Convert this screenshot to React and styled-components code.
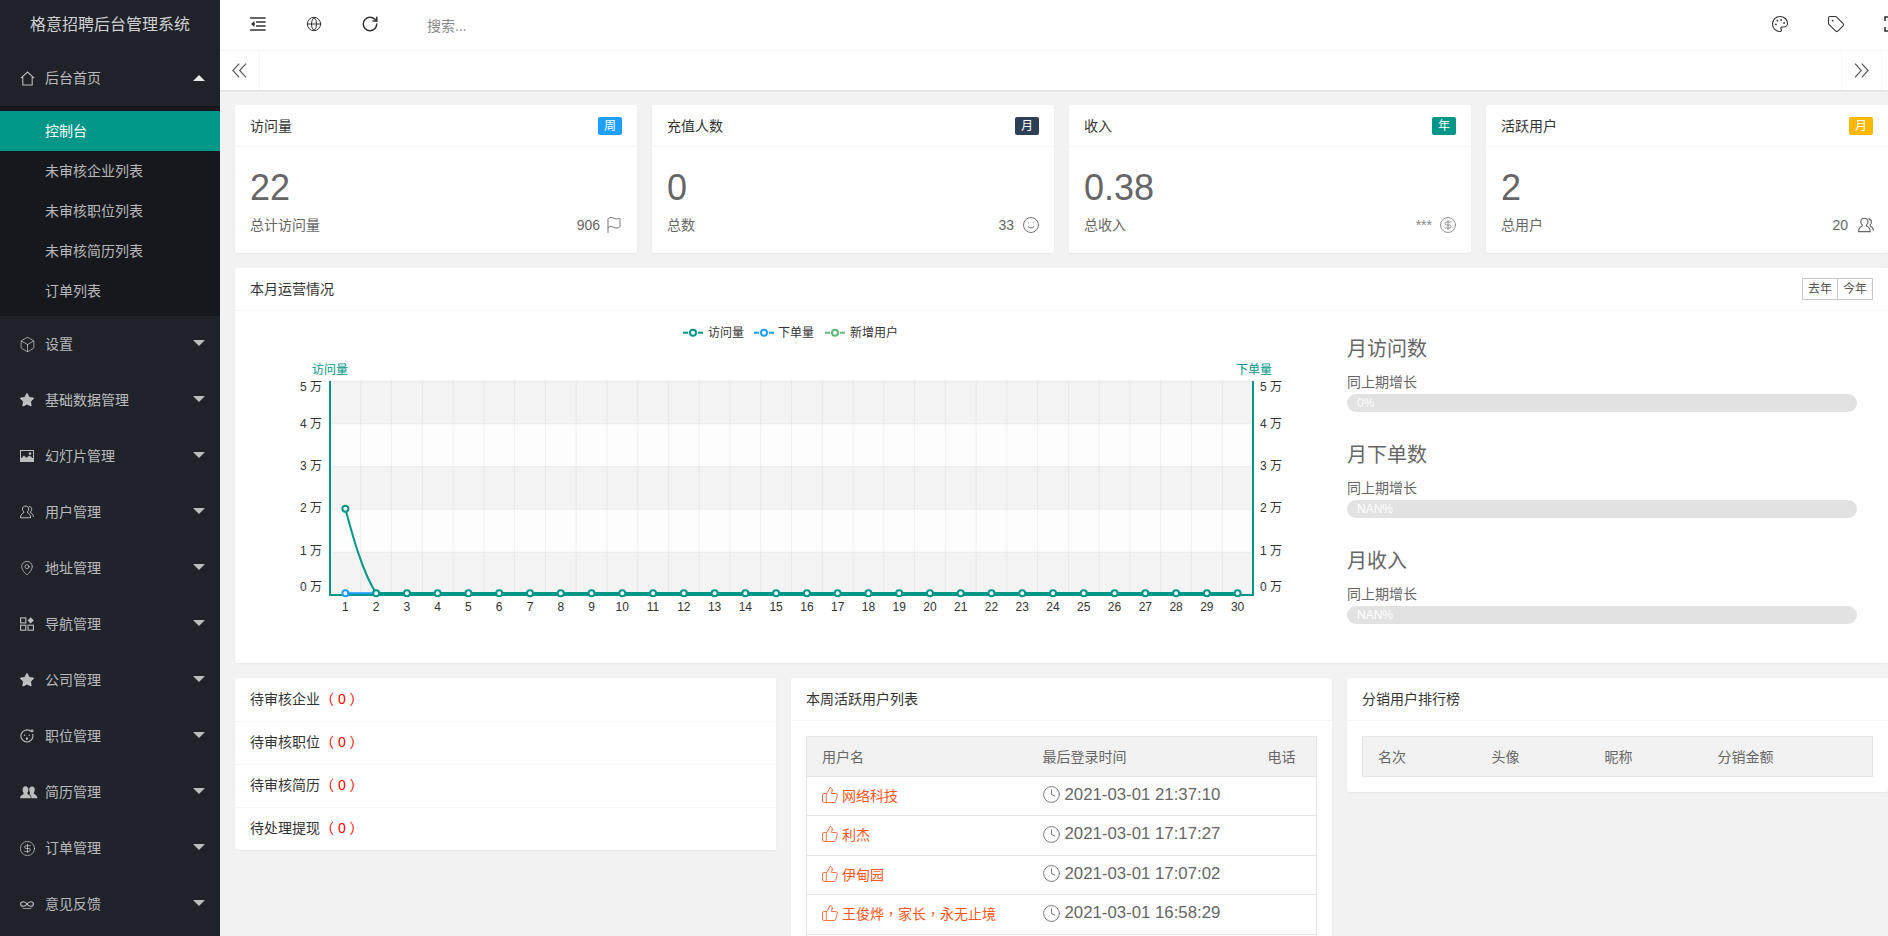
import React from 'react';
import styled, { createGlobalStyle } from 'styled-components';
import { Box, Star, MapPin, CircleDollarSign, RotateCw, Palette, Tag, Flag, Smile, ThumbsUp, Clock, Globe } from 'lucide-react';

const Global = createGlobalStyle`
  html, body { margin: 0; padding: 0; height: 100%; overflow: hidden; }
  body { font-family: "Liberation Sans", "Noto Sans CJK SC", sans-serif; font-size: 14px; color: #333; background: #f2f2f2; }
  * { box-sizing: border-box; }
`;

const Shell = styled.div`display: flex; height: 936px; overflow: hidden;`;
const Sidebar = styled.aside`width: 220px; flex: none; background: #20222a; overflow: hidden;`;
const Logo = styled.div`
  height: 50px; line-height: 50px; text-align: center; font-size: 16px; color: rgba(255,255,255,.8);
`;
const MenuItem = styled.div`
  height: 56px; display: flex; align-items: center; padding-left: 20px; position: relative;
  color: rgba(255,255,255,.7); font-size: 14px;
`;
const MenuIcon = styled.span`
  width: 14px; height: 16px; margin-right: 11px; display: flex; align-items: center; justify-content: center; flex: none;
  svg { flex: none; display: block; }
`;
const MenuLabel = styled.span`padding-bottom: 2px;`;
const Caret = styled.i`
  position: absolute; left: 193px; top: 50%; width: 0; height: 0; margin-top: ${p => (p.$up ? '-3px' : '-4px')};
  border-left: 6px solid transparent; border-right: 6px solid transparent;
  ${p => (p.$up ? 'border-bottom: 6px solid rgba(255,255,255,.9);' : 'border-top: 6px solid rgba(255,255,255,.7);')}
`;
const SubMenu = styled.div`background: #16181d; padding: 5px 0;`;
const SubItem = styled.div`
  height: 40px; line-height: 40px; padding-left: 45px; font-size: 14px;
  color: ${p => (p.$active ? '#fff' : 'rgba(255,255,255,.7)')};
  background: ${p => (p.$active ? '#009688' : 'transparent')};
`;

const Main = styled.main`flex: 1; min-width: 0; overflow: hidden; display: flex; flex-direction: column;`;
const TopBar = styled.header`
  height: 50px; flex: none; background: #fff; display: flex; align-items: center; overflow: hidden; padding-left: 10px; color: #333;
`;
const TopButton = styled.span`
  width: 56px; height: 50px; flex: none; display: flex; align-items: center; justify-content: center; padding-bottom: 2px;
`;
const SearchText = styled.span`margin-left: 29px; color: #888; font-size: 14px; flex: 1;`;
const RightTools = styled.div`display: flex; margin-right: -32px; flex: none;`;

const TabBar = styled.nav`
  height: 40px; flex: none; background: #fff; border-top: 1px solid #f6f6f6; display: flex;
  box-shadow: 0 1px 2px rgba(0,0,0,.1); position: relative; z-index: 1;
`;
const TabArrow = styled.span`
  width: 40px; flex: none; display: flex; align-items: center; justify-content: center; color: #555;
  ${p => (p.$left ? 'border-right: 1px solid #f6f6f6;' : 'border-left: 1px solid #f6f6f6;')}
`;
const TabSpace = styled.div`flex: 1;`;
const TabEnd = styled.span`width: 7px; flex: none; border-left: 1px solid #f6f6f6;`;

const Body = styled.div`width: calc(100% + 15px); padding: 15px; display: flex; flex-direction: column; gap: 15px; overflow: hidden;`;
const StatsRow = styled.section`display: grid; grid-template-columns: repeat(4, 1fr); gap: 15px;`;
const Card = styled.article`background: #fff; border-radius: 2px; box-shadow: 0 1px 2px rgba(0,0,0,.05);`;
const CardHead = styled.div`
  height: 43px; padding: 0 15px; display: flex; align-items: center; justify-content: space-between;
  border-bottom: 1px solid #f6f6f6; color: #333; font-size: 14px;
`;
const CardTitle = styled.span`padding-bottom: 2px;`;
const StatHead = styled(CardHead)`height: 42px;`;
const Badge = styled.span`
  width: 24px; height: 18px; line-height: 18px; text-align: center; border-radius: 2px; color: #fff; font-size: 12px;
  background: ${p => p.$color};
`;
const StatBody = styled.div`padding: 23px 15px 15px; height: 106px;`;
const BigNumber = styled.div`font-size: 36px; line-height: 36px; color: #666; margin-bottom: 7px;`;
const StatFoot = styled.div`display: flex; justify-content: space-between; line-height: 24px; color: #666; height: 24px;`;
const StatMeta = styled.span`display: flex; align-items: center; gap: ${p => p.$gap}px; margin-right: -1px; color: ${p => p.$muted ? '#888' : '#666'};`;

const ChartLayout = styled.div`display: flex; height: 352px;`;
const ChartPane = styled.div`width: 1102px; flex: none; svg { display: block; }`;
const RatePane = styled.div`flex: 1; padding: 22px 31px 0 10px;`;
const RateBlock = styled.div`margin-bottom: 27px;`;
const RateTitle = styled.h3`margin: 0; font-weight: 400; font-size: 20px; padding-top: 2px; line-height: 28px; color: #666;`;
const RateLabel = styled.p`margin: 9px 0 2px; line-height: 20px; color: #666; font-size: 14px;`;
const Progress = styled.div`
  height: 18px; line-height: 18px; border-radius: 20px; background: #e2e2e2; color: #fff; font-size: 12px; padding-left: 10px;
`;
const RangeGroup = styled.div`display: flex;`;
const RangeButton = styled.span`
  width: 36px; height: 22px; line-height: 20px; text-align: center; border: 1px solid #c9c9c9; background: #fff; color: #555; font-size: 12px;
  & + & { margin-left: -1px; }
`;

const BottomRow = styled.section`display: grid; grid-template-columns: repeat(3, 1fr); gap: 15px; align-items: start;`;
const TodoRow = styled.div`
  height: 43px; padding: 0 15px 3px; display: flex; align-items: center; color: #333; font-size: 14px;
  & + & { border-top: 1px solid #f6f6f6; padding-bottom: 4px; }
`;
const TodoCount = styled.span`color: #f00;`;
const TableWrap = styled.div`padding: 15px;`;
const Table = styled.table`
  width: 100%; border-collapse: collapse; table-layout: fixed; border: 1px solid #e6e6e6; font-size: 14px;
`;
const Th = styled.th`
  height: 39.5px; padding: 0 15px; background: #f2f2f2; font-weight: 400; text-align: left; color: #666; white-space: nowrap;
`;
const Td = styled.td`
  height: 39.5px; padding: 0 15px; border-top: 1px solid #e6e6e6; color: #666; white-space: nowrap;
`;
const NameCell = styled.span`display: inline-flex; align-items: center; gap: 3px; color: #ff5722; padding-bottom: 2px; margin-left: -1px;`;
const TimeCell = styled.span`display: inline-flex; align-items: center; gap: 4px; color: #666; font-size: 16.8px; margin-left: -1px;`;
const CenterComma = styled.span`font-family: "Noto Sans CJK TC", sans-serif;`;

/* ---------- drawn icons ---------- */
const IconHome = () => (
  <svg width="15" height="15" viewBox="0 0 15 15" fill="none" stroke="currentColor" strokeWidth="1.1">
    <path d="M.8 7.2 7.5 1l6.7 6.2M2.8 6v8h9.4V6" />
  </svg>
);
const IconPicture = () => (
  <svg width="14" height="12" viewBox="0 0 14 12" fill="currentColor">
    <path d="M0 0h14v12H0zM1 1v7.2l3-2.6 2.4 2.2 3-2.4L13 8.2V1zM10 2.2a1.4 1.4 0 1 1 0 2.8 1.4 1.4 0 0 1 0-2.8z" fillRule="evenodd" />
  </svg>
);
const IconUser = ({ size = 14 }) => (
  <svg width={size} height={size} viewBox="0 0 16 16" fill="none" stroke="currentColor" strokeWidth="1.1">
    <path d="M6.2 1.2c-2 0-3.4 1.5-3.4 3.500 0 1.300.6 2.400 1.500 3.100v1.100C2.400 9.600.7 11 .6 14.600h11.600c-.1-3.600-1.800-5-3.700-5.700V7.800c.9-.7 1.500-1.800 1.500-3.100 0-2-1.400-3.500-3.800-3.500z" />
    <path d="M10.400 1.600c1.800.3 3 1.500 3 3.300 0 1.200-.5 2.200-1.300 2.900v1.100c1.600.6 3.100 2 3.300 4.700" />
  </svg>
);
const IconApps = () => (
  <svg width="14" height="14" viewBox="0 0 14 14">
    <g fill="none" stroke="currentColor" strokeWidth="1.1">
      <rect x=".6" y=".9" width="5.2" height="5" />
      <rect x=".6" y="8.2" width="5.2" height="5" />
      <rect x="8" y="8.2" width="5.4" height="5" />
    </g>
    <path d="M10.700.2 13.800 3.400 10.700 6.600 7.600 3.400z" fill="currentColor" />
  </svg>
);
const IconFace = () => (
  <svg width="14" height="14" viewBox="0 0 14 14" fill="none" stroke="currentColor" strokeWidth="1.1">
    <path d="M10.600 2.200A6 6 0 1 0 12.600 5" />
    <circle cx="12" cy="1.800" r="1" />
    <circle cx="4.600" cy="6.200" r=".7" fill="currentColor" stroke="none" />
    <circle cx="9.200" cy="6.200" r=".7" fill="currentColor" stroke="none" />
    <ellipse cx="6.900" cy="9.700" rx="1" ry="1.400" fill="currentColor" stroke="none" />
  </svg>
);
const IconGroup = () => (
  <svg width="18" height="14" viewBox="0 0 18 14" fill="currentColor" style={{ marginLeft: 3 }}>
    <path d="M0 13.200c.2-2.600 2-3.400 3.600-4.200V7.800C2.900 7 2.600 5.900 2.600 4.400c0-1.900 1.100-3.200 2.900-3.200s2.900 1.300 2.900 3.200c0 1.500-.4 2.600-1 3.400V9c1.700.8 3.400 1.600 3.600 4.200z" />
    <path d="M11.600 13.200c-.1-1.900-.9-3.200-2.600-4.300.5-.3.9-.3 1-.7V7.400C9.500 6.700 9.200 5.600 9.200 4.500c0-1.800 1-3.100 2.800-3.100s2.800 1.300 2.800 3.100c0 1.200-.3 2.200-.9 2.900V9c1.500.7 3.300 1.500 3.600 4.200z" />
  </svg>
);
const IconInfinity = () => (
  <svg width="14" height="14" viewBox="0 0 14 14" fill="none" stroke="currentColor" strokeWidth="1.1">
    <path d="M7 7C6 5.400 4.900 4.700 3.400 4.700 1.800 4.700.6 5.700.6 7s1.200 2.300 2.800 2.300c1.500 0 2.600-.7 3.600-2.300 1-1.600 2.100-2.300 3.600-2.300 1.600 0 2.800 1 2.800 2.300s-1.200 2.300-2.800 2.300c-1.500 0-2.600-.7-3.600-2.300z" />
    <path d="M2.500 11.200c2.500.5 6.500.5 9 0" strokeWidth=".8" />
  </svg>
);
const IconShrink = () => (
  <svg width="16" height="14" viewBox="0 0 16 14" fill="none" stroke="currentColor" strokeWidth="1.3">
    <path d="M.2 1h15.400M6 5h9.600M6 9h9.600M.2 13h15.400" />
    <path d="M4.400 4.100 1 7l3.400 2.900z" fill="currentColor" stroke="none" />
    <path d="M3 7h2" />
  </svg>
);
const IconDoubleLeft = () => (
  <svg width="15" height="15" viewBox="0 0 15 15" fill="none" stroke="currentColor" strokeWidth="1.15">
    <path d="M7.200.6.900 7.500l6.300 6.900M14 .6 7.700 7.500l6.300 6.900" />
  </svg>
);
const IconDoubleRight = () => (
  <svg width="15" height="15" viewBox="0 0 15 15" fill="none" stroke="currentColor" strokeWidth="1.15">
    <path d="M1 .6l6.300 6.900L1 14.400M7.800.6l6.300 6.900-6.300 6.900" />
  </svg>
);

const menus = [
  ['设置', <Box size={17} strokeWidth={1.1} />],
  ['基础数据管理', <Star size={16} fill="currentColor" strokeWidth={1} />],
  ['幻灯片管理', <IconPicture />],
  ['用户管理', <IconUser />],
  ['地址管理', <MapPin size={16} strokeWidth={1.2} />],
  ['导航管理', <IconApps />],
  ['公司管理', <Star size={16} fill="currentColor" strokeWidth={1} />],
  ['职位管理', <IconFace />],
  ['简历管理', <IconGroup />],
  ['订单管理', <CircleDollarSign size={17} strokeWidth={1.1} />],
  ['意见反馈', <IconInfinity />],
];
const subMenus = ['控制台', '未审核企业列表', '未审核职位列表', '未审核简历列表', '订单列表'];

const stats = [
  { title: '访问量', badge: '周', color: '#1e9fff', value: '22', label: '总计访问量', meta: '906', gap: 5, icon: <Flag size={18} strokeWidth={1.2} /> },
  { title: '充值人数', badge: '月', color: '#2f4056', value: '0', label: '总数', meta: '33', gap: 8, icon: <Smile size={18} strokeWidth={1.2} /> },
  { title: '收入', badge: '年', color: '#009688', value: '0.38', label: '总收入', meta: '***', gap: 7, muted: true, icon: <CircleDollarSign size={18} strokeWidth={1.2} /> },
  { title: '活跃用户', badge: '月', color: '#ffb800', value: '2', label: '总用户', meta: '20', gap: 10, icon: <IconUser size={16} /> },
];

const rates = [
  ['月访问数', '0%'],
  ['月下单数', 'NAN%'],
  ['月收入', 'NAN%'],
];

const todos = ['待审核企业', '待审核职位', '待审核简历', '待处理提现'];
const activeUsers = [
  ['网络科技', '2021-03-01 21:37:10'],
  ['利杰', '2021-03-01 17:17:27'],
  ['伊甸园', '2021-03-01 17:07:02'],
  [<span>王俊烨<CenterComma>，</CenterComma>家长<CenterComma>，</CenterComma>永无止境</span>, '2021-03-01 16:58:29'],
];

/* ---------- chart ---------- */
const L = 330, R = 1253, T = 381, B = 595;
const STEP_X = (R - L) / 30;
const STEP_Y = (B - T) / 5;
const dayX = i => L + STEP_X * (i + 0.5);
const SERIES_Y = 593.2;
const labelYs = [586.7, 550.7, 507.7, 465.7, 423.7, 386.7];

const LegendMark = ({ x, color }) => (
  <g>
    <path d={`M${x} 332.7h20`} stroke={color} strokeWidth="2" />
    <circle cx={x + 10} cy="332.7" r="5" fill="#fff" />
    <circle cx={x + 10} cy="332.7" r="3" fill="#fff" stroke={color} strokeWidth="2" />
  </g>
);

const Chart = () => (
  <svg width="1102" height="352" viewBox="235 311 1102 352" fontFamily='"Liberation Sans", "Noto Sans CJK SC", sans-serif' fontSize="12">
    <LegendMark x={683} color="#009688" />
    <text x="708" y="336.8" fill="#333">访问量</text>
    <LegendMark x={754} color="#1e9fff" />
    <text x="778" y="336.8" fill="#333">下单量</text>
    <LegendMark x={825} color="#5fb878" />
    <text x="850" y="336.8" fill="#333">新增用户</text>

    <text x="312" y="374" fill="#009688">访问量</text>
    <text x="1236" y="374" fill="#009688">下单量</text>

    {[0, 1, 2, 3, 4].map(i => (
      <rect key={i} x={L} y={T + STEP_Y * i} width={R - L} height={STEP_Y} fill={i % 2 ? '#fdfdfd' : '#f3f3f3'} />
    ))}
    {[0, 1, 2, 3, 4, 5].map(i => (
      <path key={i} d={`M${L} ${T + STEP_Y * i}H${R}`} stroke="#000" strokeOpacity=".05" />
    ))}
    {Array.from({ length: 31 }, (_, i) => (
      <path key={i} d={`M${L + STEP_X * i} ${T}V${B}`} stroke="#000" strokeOpacity=".05" />
    ))}

    {labelYs.map((y, i) => (
      <g key={i} fill="#333">
        <text x="322" y={y + 4.5} textAnchor="end">{`${i} 万`}</text>
        <text x="1260" y={y + 4.5}>{`${i} 万`}</text>
      </g>
    ))}

    <path d={`M${L} ${T}V${B + 1}M${R} ${T}V${B + 1}M${L - 1} ${B}H${R + 1}`} stroke="#009688" strokeWidth="2" fill="none" />

    <path d={`M${dayX(0)} ${SERIES_Y}H${dayX(1)}`} stroke="#1e9fff" strokeWidth="2" />
    <path d={`M${dayX(0)} 508.7C${dayX(0) + 7} 535 ${dayX(0) + 17} 572 ${dayX(1)} ${SERIES_Y}`} stroke="#009688" strokeWidth="2" fill="none" />
    <path d={`M${dayX(1)} ${SERIES_Y}H${dayX(29)}`} stroke="#009688" strokeWidth="2.6" fill="none" />

    <circle cx={dayX(0)} cy={SERIES_Y} r="3" fill="#fff" stroke="#1e9fff" strokeWidth="2" />
    <circle cx={dayX(0)} cy="508.7" r="3" fill="#fff" stroke="#009688" strokeWidth="2" />
    {Array.from({ length: 30 }, (_, i) => i).slice(1).map(i => (
      <circle key={i} cx={dayX(i)} cy={SERIES_Y} r="3" fill="#fff" stroke="#009688" strokeWidth="2" />
    ))}
    {Array.from({ length: 30 }, (_, i) => (
      <text key={i} x={dayX(i)} y="611" textAnchor="middle" fill="#333">{i + 1}</text>
    ))}
  </svg>
);

export default function App() {
  return (
    <>
      <Global />
      <Shell>
        <Sidebar>
          <Logo>格意招聘后台管理系统</Logo>
          <MenuItem>
            <MenuIcon><IconHome /></MenuIcon><MenuLabel>后台首页</MenuLabel><Caret $up />
          </MenuItem>
          <SubMenu>
            {subMenus.map((s, i) => <SubItem key={s} $active={i === 0}>{s}</SubItem>)}
          </SubMenu>
          {menus.map(([label, icon]) => (
            <MenuItem key={label}>
              <MenuIcon>{icon}</MenuIcon><MenuLabel>{label}</MenuLabel><Caret />
            </MenuItem>
          ))}
        </Sidebar>
        <Main>
          <TopBar>
            <TopButton><IconShrink /></TopButton>
            <TopButton><Globe size={16} strokeWidth={1.5} /></TopButton>
            <TopButton><RotateCw size={18} strokeWidth={2} /></TopButton>
            <SearchText>搜索...</SearchText>
            <RightTools>
              <TopButton><Palette size={18} strokeWidth={1.5} /></TopButton>
              <TopButton><Tag size={18} strokeWidth={1.4} /></TopButton>
              <TopButton>
                <svg width="16" height="16" viewBox="0 0 16 16" fill="none" stroke="currentColor" strokeWidth="1.6">
                  <path d="M1 5V1h4M11 1h4v4M15 11v4h-4M5 15H1v-4" />
                </svg>
              </TopButton>
            </RightTools>
          </TopBar>
          <TabBar>
            <TabArrow $left><IconDoubleLeft /></TabArrow>
            <TabSpace />
            <TabArrow><IconDoubleRight /></TabArrow>
            <TabEnd />
          </TabBar>
          <Body>
            <StatsRow>
              {stats.map(s => (
                <Card key={s.title}>
                  <StatHead><CardTitle>{s.title}</CardTitle><Badge $color={s.color}>{s.badge}</Badge></StatHead>
                  <StatBody>
                    <BigNumber>{s.value}</BigNumber>
                    <StatFoot>
                      <span>{s.label}</span>
                      <StatMeta $muted={s.muted} $gap={s.gap}>{s.meta}{s.icon}</StatMeta>
                    </StatFoot>
                  </StatBody>
                </Card>
              ))}
            </StatsRow>
            <Card>
              <CardHead>
                <CardTitle>本月运营情况</CardTitle>
                <RangeGroup><RangeButton>去年</RangeButton><RangeButton>今年</RangeButton></RangeGroup>
              </CardHead>
              <ChartLayout>
                <ChartPane><Chart /></ChartPane>
                <RatePane>
                  {rates.map(([t, v]) => (
                    <RateBlock key={t}>
                      <RateTitle>{t}</RateTitle>
                      <RateLabel>同上期增长</RateLabel>
                      <Progress>{v}</Progress>
                    </RateBlock>
                  ))}
                </RatePane>
              </ChartLayout>
            </Card>
            <BottomRow>
              <Card>
                {todos.map(t => (
                  <TodoRow key={t}>{t}<TodoCount>（ 0 ）</TodoCount></TodoRow>
                ))}
              </Card>
              <Card>
                <CardHead><CardTitle>本周活跃用户列表</CardTitle></CardHead>
                <TableWrap>
                  <Table>
                    <colgroup><col style={{ width: 221 }} /><col style={{ width: 225 }} /><col /></colgroup>
                    <thead><tr><Th>用户名</Th><Th>最后登录时间</Th><Th>电话</Th></tr></thead>
                    <tbody>
                      {activeUsers.map(([n, t]) => (
                        <tr key={t}>
                          <Td><NameCell><ThumbsUp size={18} strokeWidth={1.1} />{n}</NameCell></Td>
                          <Td><TimeCell><Clock size={19} strokeWidth={1.1} />{t}</TimeCell></Td>
                          <Td />
                        </tr>
                      ))}
                      <tr><Td /><Td /><Td /></tr>
                    </tbody>
                  </Table>
                </TableWrap>
              </Card>
              <Card>
                <CardHead><CardTitle>分销用户排行榜</CardTitle></CardHead>
                <TableWrap>
                  <Table>
                    <colgroup><col style={{ width: 114 }} /><col style={{ width: 113 }} /><col style={{ width: 113 }} /><col /></colgroup>
                    <thead><tr><Th>名次</Th><Th>头像</Th><Th>昵称</Th><Th>分销金额</Th></tr></thead>
                  </Table>
                </TableWrap>
              </Card>
            </BottomRow>
          </Body>
        </Main>
      </Shell>
    </>
  );
}
